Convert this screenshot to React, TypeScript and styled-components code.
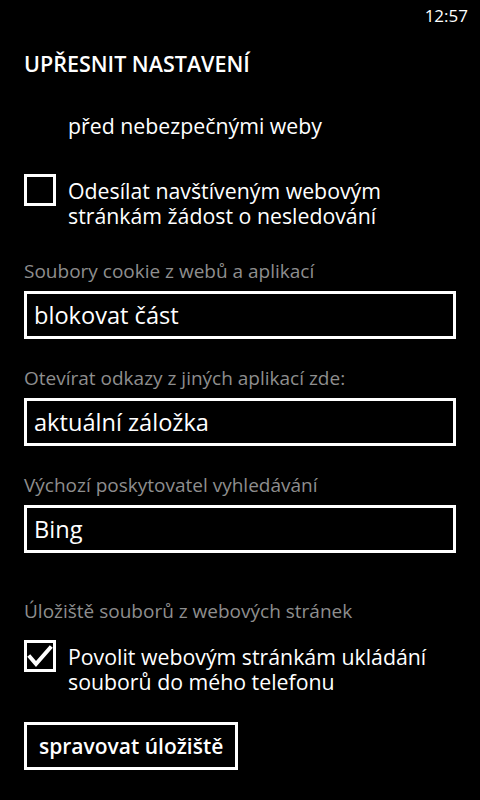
import React from "react";
import styled, { createGlobalStyle } from "styled-components";

const GlobalStyle = createGlobalStyle`
  html, body {
    margin: 0;
    padding: 0;
    background: #000;
  }
  body {
    font-family: "Open Sans", "Noto Sans", sans-serif;
    color: #fff;
  }
`;

const Screen = styled.div`
  width: 480px;
  height: 800px;
  background: #000;
  overflow: hidden;
  display: flex;
  flex-direction: column;
`;

const StatusBar = styled.div`
  height: 32px;
  display: flex;
  justify-content: flex-end;
  align-items: center;
  padding-right: 12px;
  font-size: 17px;
  line-height: 32px;
`;

const Content = styled.div`
  display: flex;
  flex-direction: column;
  padding: 0 24px;
`;

const Title = styled.h1`
  margin: 20px 0 0;
  font-size: 21.5px;
  font-weight: 600;
  line-height: 24px;
`;

const Tail = styled.div`
  margin-top: 37px;
  padding-left: 44px;
  font-size: 21.3px;
  line-height: 26px;
`;

const CheckRow = styled.div<{ $top: number }>`
  display: flex;
  gap: 12px;
  margin-top: ${(p) => p.$top}px;
`;

const Box = styled.div`
  flex: none;
  width: 26px;
  height: 26px;
  border: 3px solid #fff;
  background: #000;
  display: flex;
  align-items: center;
  justify-content: center;
`;

const CheckText = styled.div`
  margin-top: 4px;
  display: flex;
  flex-direction: column;
`;

const CheckLine = styled.div`
  height: 25px;
  font-size: 21.3px;
  line-height: 25px;
  white-space: nowrap;
`;

const Label = styled.div<{ $top: number }>`
  margin-top: ${(p) => p.$top}px;
  color: #8e8e8e;
  font-size: 19px;
  line-height: 24px;
`;

const Picker = styled.div`
  margin-top: 8px;
  height: 42px;
  border: 3px solid #fff;
  padding-left: 7px;
  font-size: 23.6px;
  line-height: 42px;
`;

const ActionButton = styled.button`
  align-self: flex-start;
  margin-top: 28px;
  height: 48px;
  padding: 0 12px;
  border: 3px solid #fff;
  border-radius: 0;
  background: #000;
  color: #fff;
  font-family: "Open Sans", "Noto Sans", sans-serif;
  font-size: 21px;
  font-weight: 600;
  line-height: 40px;
`;

const Check = () => (
  <svg width="26" height="26" viewBox="0 0 26 26">
    <polyline
      points="3,14 9,21 23,5"
      fill="none"
      stroke="#fff"
      strokeWidth="4"
      strokeLinecap="square"
    />
  </svg>
);

const Checkbox = ({ checked }: { checked: boolean }) => (
  <Box>{checked ? <Check /> : null}</Box>
);

const CheckItem = ({
  checked,
  lines,
  top
}: {
  checked: boolean;
  lines: string[];
  top: number;
}) => (
  <CheckRow $top={top}>
    <Checkbox checked={checked} />
    <CheckText>
      {lines.map((l) => (
        <CheckLine key={l}>{l}</CheckLine>
      ))}
    </CheckText>
  </CheckRow>
);

const App = () => {
  return (
    <Screen>
      <GlobalStyle />
      <StatusBar>12:57</StatusBar>
      <Content>
        <Title>UPŘESNIT NASTAVENÍ</Title>
        <Tail>před nebezpečnými weby</Tail>
        <CheckItem
          top={35}
          checked={false}
          lines={["Odesílat navštíveným webovým", "stránkám žádost o nesledování"]}
        />
        <Label $top={31}>Soubory cookie z webů a aplikací</Label>
        <Picker>blokovat část</Picker>
        <Label $top={27}>Otevírat odkazy z jiných aplikací zde:</Label>
        <Picker>aktuální záložka</Picker>
        <Label $top={27}>Výchozí poskytovatel vyhledávání</Label>
        <Picker>Bing</Picker>
        <Label $top={46}>Úložiště souborů z webových stránek</Label>
        <CheckItem
          top={17}
          checked={true}
          lines={["Povolit webovým stránkám ukládání", "souborů do mého telefonu"]}
        />
        <ActionButton>spravovat úložiště</ActionButton>
      </Content>
    </Screen>
  );
};

export default App;
